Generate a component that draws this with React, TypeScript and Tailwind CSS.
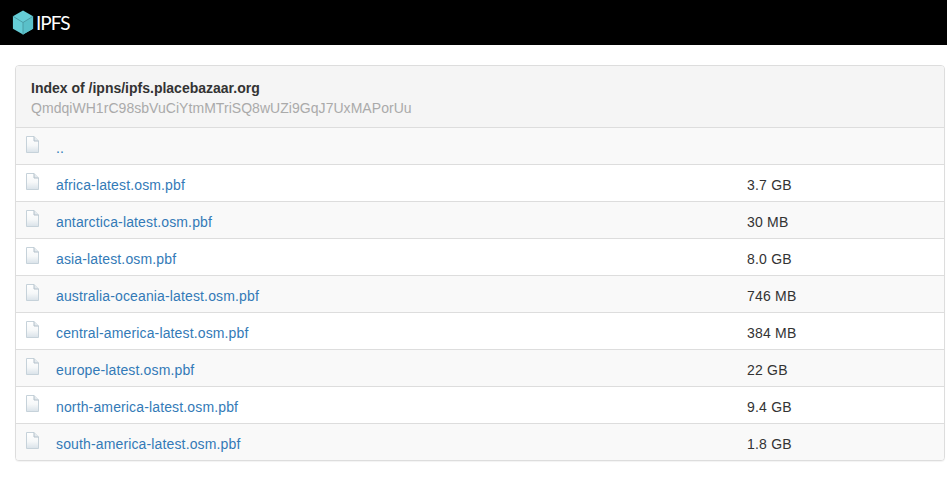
const files = [
  { name: '..', size: '' },
  { name: 'africa-latest.osm.pbf', size: '3.7 GB' },
  { name: 'antarctica-latest.osm.pbf', size: '30 MB' },
  { name: 'asia-latest.osm.pbf', size: '8.0 GB' },
  { name: 'australia-oceania-latest.osm.pbf', size: '746 MB' },
  { name: 'central-america-latest.osm.pbf', size: '384 MB' },
  { name: 'europe-latest.osm.pbf', size: '22 GB' },
  { name: 'north-america-latest.osm.pbf', size: '9.4 GB' },
  { name: 'south-america-latest.osm.pbf', size: '1.8 GB' },
];

function FileIcon() {
  return (
    <svg width="16" height="17" viewBox="0 0 16 17" className="block">
      <defs>
        <linearGradient id="page" x1="0" y1="0" x2="0" y2="1">
          <stop offset="0" stopColor="#ffffff" />
          <stop offset="0.55" stopColor="#f6f8f9" />
          <stop offset="1" stopColor="#d9e2e9" />
        </linearGradient>
      </defs>
      <path d="M1.5 0.5H9L13.5 5V16.5H1.5Z" fill="url(#page)" stroke="#c6d2da" />
      <path d="M9 0.5V5H13.5" fill="#e4eaee" stroke="#b3c0ca" />
    </svg>
  );
}

function Logo() {
  return (
    <svg width="22" height="25" viewBox="0 0 24 26" preserveAspectRatio="none" className="shrink-0">
      <path d="M12 0.5L23 6.5V19.5L12 25.5L1 19.5V6.5Z" fill="#65cdd6" />
      <path d="M12 13V25.5L23 19.5V6.5Z" fill="#5ac0c9" />
      <path d="M1 6.5L12 13L23 6.5M12 13V25.5" fill="none" stroke="#4a9aa3" strokeWidth="1" />
    </svg>
  );
}

export default function App() {
  return (
    <div className="min-h-[496px] bg-white font-['Liberation_Sans',Arial,sans-serif] text-sm leading-5 text-[#333]">
      {/* Header */}
      <div className="h-[45px] bg-black flex items-center pl-[12px]">
        <Logo />
        <span className="ml-[2px] text-[19px] font-['Lato',sans-serif] font-normal text-white tracking-[-1px]">IPFS</span>
      </div>

      {/* Listing */}
      <div className="mx-[15px] mt-[20px] mr-[2px] border border-[#ddd] rounded bg-white shadow-[0_1px_1px_rgba(0,0,0,0.05)] overflow-hidden">
        <div className="bg-[#f5f5f5] px-[15px] pt-[12px] pb-[10px] h-[61px]">
          <div className="font-bold">Index of /ipns/ipfs.placebazaar.org</div>
          <div className="text-[#aaa] tracking-[0.045px]">QmdqiWH1rC98sbVuCiYtmMTriSQ8wUZi9GqJ7UxMAPorUu</div>
        </div>
        {files.map((f, i) => (
          <div
            key={f.name}
            className={`flex h-[37px] border-t border-[#ddd] pt-[10px] ${i % 2 === 0 ? 'bg-[#f9f9f9]' : 'bg-white'}`}
          >
            <div className="w-[40px] pl-[9px] -mt-[2px] shrink-0">
              <FileIcon />
            </div>
            <a href="#" className="w-[691px] shrink-0 text-[#337ab7] no-underline tracking-[0.14px]">{f.name}</a>
            <span className="tracking-[0.2px]">{f.size}</span>
          </div>
        ))}
      </div>
    </div>
  );
}
